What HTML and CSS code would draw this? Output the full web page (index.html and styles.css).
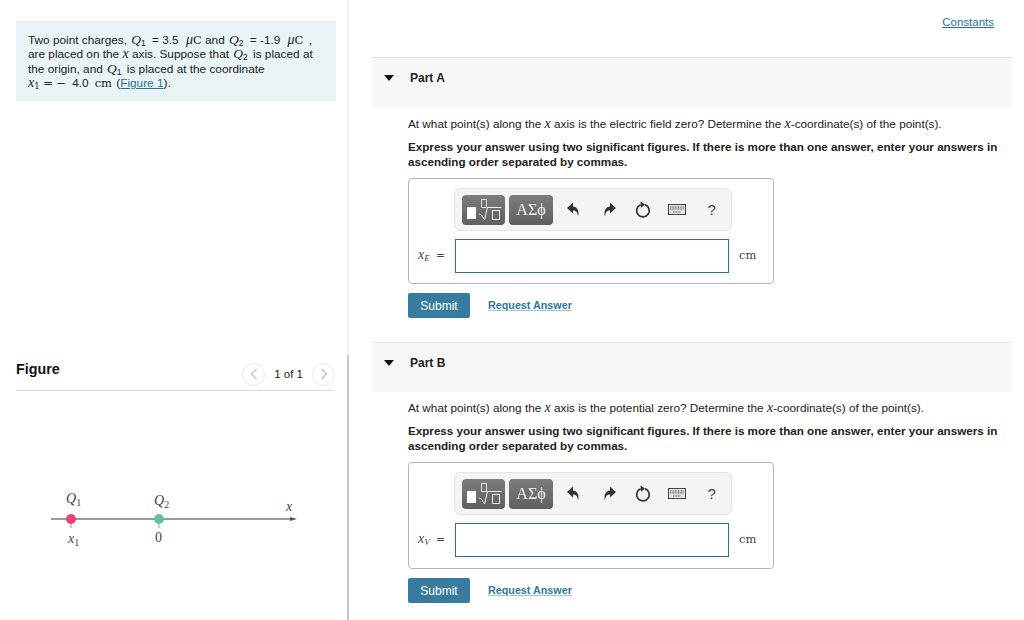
FILE: index.html
```html
<!DOCTYPE html>
<html lang="en">
<head>
  <meta charset="UTF-8" />
  <title>Two point charges</title>
  <link rel="stylesheet" href="styles.css">
</head>
<body>
  <div class="page">
    <div class="left">
      <div class="intro">
        Two point charges, <i class="q">Q</i><sub>1</sub> <span class="gap">= 3.5</span> <span class="m"><i>μ</i>C</span> and <i class="q">Q</i><sub>2</sub> <span class="gap">= -1.9</span> <span class="m"><i>μ</i>C</span> <span class="comma">,</span><br>
        are placed on the <span class="m"><i>x</i></span> axis. Suppose that <i class="q">Q</i><sub>2</sub> <span class="tiny">is placed at</span><br>
        the origin, and <i class="q">Q</i><sub>1</sub> <span class="tiny">is placed at the coordinate</span><br>
        <span class="m"><i>x</i><sub>1</sub> <span class="wide">= −</span></span><span class="num">4.0</span><span class="m unit-wide">cm</span> (<a href="#">Figure 1</a>).
      </div>

      <div class="figure-panel">
        <div class="figure-head">
          <h2>Figure</h2>
          <div class="pager">
            <span class="round"><svg width="8" height="12" viewBox="0 0 8 12"><path d="M6.500 1 1.500 6l5 5" /></svg></span>
            <span>1 of 1</span>
            <span class="round"><svg width="8" height="12" viewBox="0 0 8 12"><path d="M1.500 1l5 5-5 5" /></svg></span>
          </div>
        </div>

        <svg class="diagram" width="320" height="70" viewBox="0 0 320 70">
          <line x1="35" y1="34" x2="276" y2="34" stroke="#777" stroke-width="1.5" />
          <path d="M274 32l7 2-7 2z" fill="#555" />
          <line x1="55" y1="34" x2="55" y2="43" stroke="#999" />
          <line x1="143" y1="34" x2="143" y2="43" stroke="#999" />
          <circle cx="55" cy="34" r="5" fill="#e6446f" />
          <circle cx="143" cy="34" r="5" fill="#62bfa8" />
          <text class="fig" x="50" y="18">Q<tspan class="fig-sub" dy="3">1</tspan></text>
          <text class="fig" x="138" y="20">Q<tspan class="fig-sub" dy="3">2</tspan></text>
          <text class="fig" x="270" y="26">x</text>
          <text class="fig" x="52" y="58">x<tspan class="fig-sub" dy="3">1</tspan></text>
          <text class="fig fig-zero" x="139" y="57">0</text>
        </svg>
      </div>
    </div>

    <div class="right">
      <div class="constants"><a href="#">Constants</a></div>

      <section class="part part-a">
        <div class="part-head"><span class="caret"></span>Part A</div>
        <div class="part-body">
          <p class="question">At what point(s) along the <span class="m"><i>x</i></span> axis is the electric field zero? Determine the <span class="m"><i>x</i></span>-coordinate(s) of the point(s).</p>
          <p class="express">Express your answer using two significant figures. If there is more than one answer, enter your answers in ascending order separated by commas.</p>
          <div class="answer">
            <div class="toolbar">
              <span class="tool tool-math">
                <svg width="43" height="30" viewBox="0 0 43 30"><rect x="5" y="12" width="9" height="12" fill="#fff" /><rect x="19.500" y="4.500" width="5" height="8" fill="none" stroke="#ddd" /><path d="M17 19l2.500 1 3 5 3-12.500h14" fill="none" stroke="#eee" /><rect x="30.500" y="15.500" width="7" height="9" fill="none" stroke="#eee" /></svg>
              </span>
              <span class="tool">ΑΣϕ</span>
              <span class="actions">
                <span class="action"><svg width="14" height="16" viewBox="0 0 14 16"><path d="M6 .5 0 6l6 5.500V8.500c3 0 4.500 1.500 5 6 1.500-5-.5-9.500-5-10z" fill="#333" /></svg></span>
                <span class="action"><svg width="14" height="16" viewBox="0 0 14 16"><path d="M8 .5 14 6l-6 5.500V8.500c-3 0-4.500 1.500-5 6-1.500-5 .5-9.500 5-10z" fill="#333" /></svg></span>
                <span class="action"><svg width="16" height="18" viewBox="0 0 16 18"><path d="M10 3.600a6.300 6.300 0 1 1-4.400.1" fill="none" stroke="#333" stroke-width="1.700" /><path d="M5.500 .5 10 3.500 6 6.800z" fill="#333" /></svg></span>
                <span class="action"><svg width="18" height="11" viewBox="0 0 18 11"><rect x=".5" y=".5" width="17" height="10" fill="#e4e4e4" stroke="#444" /><path d="M2 3h14M2 5h14M5 8h8" stroke="#444" stroke-dasharray="1 .6" /></svg></span>
                <span class="action help">?</span>
              </span>
            </div>
            <div class="answer-row">
              <label class="m"><i>x</i><sub><i>E</i></sub> =</label>
              <input type="text" />
              <span class="m unit">cm</span>
            </div>
          </div>
          <div class="buttons">
            <button>Submit</button>
            <a class="request" href="#">Request Answer</a>
          </div>
        </div>
      </section>

      <section class="part part-b">
        <div class="part-head"><span class="caret"></span>Part B</div>
        <div class="part-body">
          <p class="question">At what point(s) along the <span class="m"><i>x</i></span> axis is the potential zero? Determine the <span class="m"><i>x</i></span>-coordinate(s) of the point(s).</p>
          <p class="express">Express your answer using two significant figures. If there is more than one answer, enter your answers in ascending order separated by commas.</p>
          <div class="answer">
            <div class="toolbar">
              <span class="tool tool-math">
                <svg width="43" height="30" viewBox="0 0 43 30"><rect x="5" y="12" width="9" height="12" fill="#fff" /><rect x="19.500" y="4.500" width="5" height="8" fill="none" stroke="#ddd" /><path d="M17 19l2.500 1 3 5 3-12.500h14" fill="none" stroke="#eee" /><rect x="30.500" y="15.500" width="7" height="9" fill="none" stroke="#eee" /></svg>
              </span>
              <span class="tool">ΑΣϕ</span>
              <span class="actions">
                <span class="action"><svg width="14" height="16" viewBox="0 0 14 16"><path d="M6 .5 0 6l6 5.500V8.500c3 0 4.500 1.500 5 6 1.500-5-.5-9.500-5-10z" fill="#333" /></svg></span>
                <span class="action"><svg width="14" height="16" viewBox="0 0 14 16"><path d="M8 .5 14 6l-6 5.500V8.500c-3 0-4.500 1.500-5 6-1.500-5 .5-9.500 5-10z" fill="#333" /></svg></span>
                <span class="action"><svg width="16" height="18" viewBox="0 0 16 18"><path d="M10 3.600a6.300 6.300 0 1 1-4.400.1" fill="none" stroke="#333" stroke-width="1.700" /><path d="M5.500 .5 10 3.500 6 6.800z" fill="#333" /></svg></span>
                <span class="action"><svg width="18" height="11" viewBox="0 0 18 11"><rect x=".5" y=".5" width="17" height="10" fill="#e4e4e4" stroke="#444" /><path d="M2 3h14M2 5h14M5 8h8" stroke="#444" stroke-dasharray="1 .6" /></svg></span>
                <span class="action help">?</span>
              </span>
            </div>
            <div class="answer-row">
              <label class="m"><i>x</i><sub><i>V</i></sub> =</label>
              <input type="text" />
              <span class="m unit">cm</span>
            </div>
          </div>
          <div class="buttons">
            <button>Submit</button>
            <a class="request" href="#">Request Answer</a>
          </div>
        </div>
      </section>
    </div>
  </div>
</body>
</html>
```

FILE: styles.css
```css
body {
  margin: 0;
  background-color: #fff;
  color: #212121;
  font-family: "Liberation Sans", Arial, sans-serif;
  font-size: 12px;
}

a {
  color: #2c7195;
}

.page {
  display: flex;
  height: 620px;
  overflow: hidden;
}

.left {
  flex-shrink: 0;
  width: 349px;
  padding-top: 21px;
  box-sizing: border-box;
  border-right: 2px solid #edf1f6;
}

.intro {
  width: 320px;
  height: 80px;
  box-sizing: border-box;
  margin-left: 16px;
  padding: 11px 0 0 12px;
  background-color: #e9f4f7;
  border-top: 1px solid #e3ecef;
  font-size: 11.8px;
  line-height: 14.4px;
}

.intro sub,
label sub {
  font-size: 8.5px;
  line-height: 0;
  vertical-align: -2px;
}

.q {
  font-family: "Liberation Serif", serif;
  font-size: 13.5px;
  line-height: 0;
  margin-left: 1px;
}

.m {
  font-family: "DejaVu Serif", serif;
  font-size: 11.5px;
  line-height: 0;
}

.m i {
  font-family: "Liberation Serif", serif;
  font-size: 14px;
}

.m sub i {
  font-size: 9px;
}

.intro .gap {
  margin-left: 3px;
  margin-right: 4px;
}

.intro .tiny {
  margin-left: 2px;
}

.intro .comma {
  margin-left: 2px;
}

.wide {
  margin-right: 6px;
}

.unit-wide {
  margin-left: 6px;
  margin-right: 1px;
}

.figure-panel {
  margin-top: 254px;
  margin-right: -2px;
  padding: 1px 12px 228px 16px;
  border-right: 2px solid #bccadb;
}

.figure-head {
  display: flex;
  justify-content: space-between;
  align-items: center;
  height: 34px;
  margin-right: 1px;
  border-bottom: 1px solid #d9dde1;
}

.figure-head h2 {
  margin: 0 0 8px;
  font-size: 14.3px;
  color: #111;
}

.pager {
  display: flex;
  align-items: center;
  gap: 9px;
  margin-top: 2px;
  margin-right: -1px;
  font-size: 11.5px;
}

.round {
  width: 23px;
  height: 23px;
  box-sizing: border-box;
  border: 1px solid #e4e7ea;
  border-radius: 50%;
  display: flex;
  align-items: center;
  justify-content: center;
}

.round path {
  fill: none;
  stroke: #b5bcc2;
  stroke-width: 1.2;
}

.diagram {
  display: block;
  margin-top: 94px;
}

.fig {
  font-family: "Liberation Serif", serif;
  font-style: italic;
  font-size: 14px;
  fill: #444;
}

.fig-sub {
  font-size: 10px;
  font-style: normal;
}

.fig-zero {
  font-style: normal;
}

.right {
  flex: 1;
  padding-left: 23px;
  padding-right: 12px;
}

.constants {
  height: 57px;
  padding-top: 16px;
  padding-right: 18px;
  box-sizing: border-box;
  text-align: right;
  font-size: 11.5px;
}

.part-head {
  display: flex;
  align-items: flex-start;
  background-color: #f7f7f7;
  border-top: 1px solid #e6e6e6;
  height: 50px;
  padding-top: 13px;
  box-sizing: border-box;
  font-size: 12px;
  font-weight: bold;
  color: #222;
}

.caret {
  width: 0;
  height: 0;
  margin: 4px 16px 0 12px;
  border-left: 5px solid transparent;
  border-right: 5px solid transparent;
  border-top: 6px solid #111;
}

.part-a .part-head {
  height: 51px;
}

.part-body {
  padding: 9px 14px 0 36px;
}

.question {
  margin: 0;
  font-size: 11.75px;
  line-height: 14px;
}

.express {
  margin: 8px 0 0;
  font-size: 11.65px;
  font-weight: bold;
  line-height: 15px;
}

.answer {
  width: 366px;
  height: 106px;
  box-sizing: border-box;
  margin-top: 9px;
  padding: 9px 0 0 45px;
  border: 1px solid #b5b5b5;
  border-radius: 4px;
}

.part-b .answer {
  height: 107px;
}

.toolbar {
  display: flex;
  align-items: center;
  width: 278px;
  height: 43px;
  box-sizing: border-box;
  padding-left: 7px;
  gap: 4px;
  background-color: #f4f4f4;
  border: 1px solid #e3e3e3;
  border-radius: 6px;
}

.tool {
  width: 44px;
  height: 30px;
  display: flex;
  align-items: center;
  justify-content: center;
  border-radius: 4px;
  background: linear-gradient(#7d7d7d, #5f5f5f);
  color: #eee;
  font-family: "Liberation Serif", serif;
  font-size: 16px;
}

.tool-math {
  width: 43px;
}

.actions {
  display: flex;
  align-items: center;
}

.action {
  width: 34.4px;
  display: flex;
  align-items: center;
  justify-content: center;
}

.help {
  font-size: 15px;
  color: #444;
}

.answer-row {
  display: flex;
  align-items: center;
  margin-top: 8px;
  margin-left: -36px;
}

.answer-row label {
  width: 37px;
  margin-bottom: 2px;
  font-size: 10.5px;
  line-height: 16px;
  word-spacing: 3px;
  color: #444;
}

.answer-row input {
  width: 274px;
  height: 34px;
  box-sizing: border-box;
  border: 1px solid #2c7195;
  outline: none;
}

.unit {
  margin-left: 10px;
  margin-bottom: 2px;
  font-size: 11.5px;
  line-height: 16px;
  color: #444;
}

.buttons {
  display: flex;
  align-items: center;
  gap: 18px;
  margin-top: 9px;
}

button {
  width: 62px;
  height: 25px;
  padding: 0;
  border: none;
  border-radius: 2px;
  background-color: #377c9e;
  color: #fff;
  font-family: "Liberation Sans", Arial, sans-serif;
  font-size: 12px;
}

.request {
  margin-bottom: 2px;
  font-size: 10.75px;
  font-weight: bold;
  color: #2e7898;
  text-decoration-color: #9cc3d6;
}

.part-b {
  margin-top: 24px;
}
```
